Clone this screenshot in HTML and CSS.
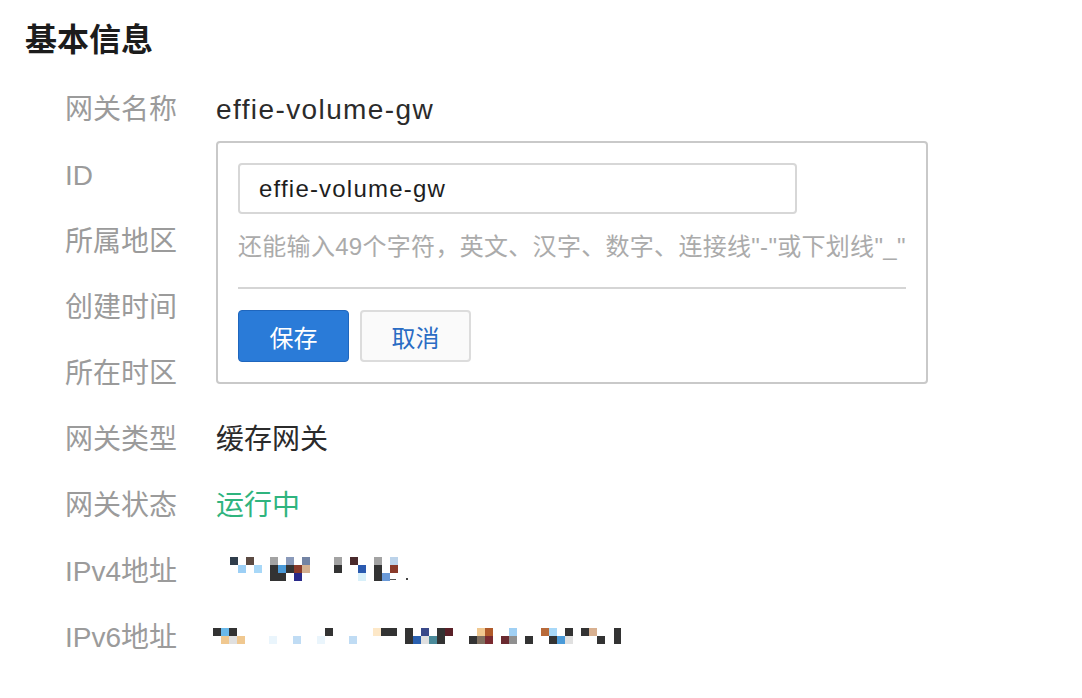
FILE: index.html
```html
<!DOCTYPE html>
<html lang="zh-CN">
<head>
<meta charset="utf-8">
<title>基本信息</title>
<link rel="stylesheet" href="styles.css">
</head>
<body>
<div class="page">
  <h2 class="title">基本信息</h2>
  <dl class="info">
    <div class="row row-name">
      <dt>网关名称</dt>
      <dd class="latin">effie-volume-gw</dd>
      <div class="popover">
        <input class="name-input latin" type="text" value="effie-volume-gw">
        <p class="hint">还能输入49个字符，英文、汉字、数字、连接线"-"或下划线"_"</p>
        <hr class="divider">
        <div class="actions">
          <button class="btn btn-primary" type="button">保存</button>
          <button class="btn btn-default" type="button">取消</button>
        </div>
      </div>
    </div>
    <div class="row"><dt>ID</dt><dd></dd></div>
    <div class="row"><dt>所属地区</dt><dd></dd></div>
    <div class="row"><dt>创建时间</dt><dd></dd></div>
    <div class="row"><dt>所在时区</dt><dd></dd></div>
    <div class="row"><dt>网关类型</dt><dd>缓存网关</dd></div>
    <div class="row"><dt>网关状态</dt><dd class="status">运行中</dd></div>
    <div class="row">
      <dt>IPv4地址</dt>
      <dd>
        <svg class="mosaic" width="420" height="66" viewBox="0 0 420 66" aria-hidden="true">
          <g>
            <rect x="20" y="20" width="8" height="8" fill="#2f3d4c"/>
            <rect x="36" y="20" width="8" height="8" fill="#5b4a42"/>
            <rect x="60" y="20" width="8" height="8" fill="#a3a3a3"/>
            <rect x="76" y="20" width="8" height="8" fill="#8a9aba"/>
            <rect x="92" y="20" width="8" height="8" fill="#7384a4"/>
            <rect x="124" y="20" width="8" height="8" fill="#a3a3a3"/>
            <rect x="140" y="20" width="8" height="8" fill="#4a2a2c"/>
            <rect x="164" y="20" width="8" height="8" fill="#a3a3a3"/>
            <rect x="180" y="20" width="8" height="8" fill="#bcd3ea"/>

            <rect x="28" y="28" width="8" height="8" fill="#9ccff5"/>
            <rect x="44" y="28" width="8" height="8" fill="#a8d8f8"/>
            <rect x="60" y="28" width="8" height="8" fill="#333333"/>
            <rect x="68" y="28" width="8" height="8" fill="#4a9ad8"/>
            <rect x="76" y="28" width="8" height="8" fill="#333333"/>
            <rect x="84" y="28" width="8" height="8" fill="#8a3a2a"/>
            <rect x="92" y="28" width="8" height="8" fill="#d4b090"/>
            <rect x="124" y="28" width="8" height="8" fill="#333333"/>
            <rect x="148" y="28" width="8" height="8" fill="#2a5ab0"/>
            <rect x="164" y="28" width="8" height="8" fill="#333333"/>
            <rect x="180" y="28" width="8" height="8" fill="#8a3a2a"/>

            <rect x="60" y="36" width="16" height="8" fill="#333333"/>
            <rect x="84" y="36" width="8" height="8" fill="#2a2a8a"/>
            <rect x="148" y="36" width="8" height="8" fill="#d8f0fa"/>
            <rect x="164" y="36" width="8" height="8" fill="#333333"/>
            <rect x="172" y="36" width="8" height="8" fill="#6a9ad8"/>
            <rect x="180" y="42" width="6" height="1" fill="#555555"/>
            <rect x="196" y="41" width="2" height="2" fill="#444444"/>
          </g>
        </svg>
      </dd>
    </div>
    <div class="row">
      <dt>IPv6地址</dt>
      <dd>
        <svg class="mosaic" width="420" height="66" viewBox="0 0 420 66" aria-hidden="true">
          <g>
            <rect x="3" y="25" width="8" height="8" fill="#333333"/>
            <rect x="11" y="25" width="8" height="8" fill="#6ab8e8"/>
            <rect x="19" y="25" width="8" height="8" fill="#333333"/>
            <rect x="115" y="25" width="8" height="8" fill="#333333"/>
            <rect x="163" y="25" width="8" height="8" fill="#fde8c8"/>
            <rect x="171" y="25" width="16" height="8" fill="#333333"/>
            <rect x="195" y="25" width="8" height="8" fill="#333333"/>
            <rect x="211" y="25" width="8" height="8" fill="#3a4a8a"/>
            <rect x="227" y="25" width="8" height="8" fill="#333333"/>
            <rect x="235" y="25" width="8" height="8" fill="#5a2028"/>
            <rect x="267" y="25" width="8" height="8" fill="#f0c890"/>
            <rect x="275" y="25" width="8" height="8" fill="#b05a2a"/>
            <rect x="299" y="25" width="8" height="8" fill="#a0d0f4"/>
            <rect x="331" y="25" width="8" height="8" fill="#b86a3a"/>
            <rect x="339" y="25" width="8" height="8" fill="#a8d8f8"/>
            <rect x="355" y="25" width="8" height="8" fill="#333333"/>
            <rect x="371" y="25" width="8" height="8" fill="#333333"/>
            <rect x="379" y="25" width="8" height="8" fill="#d8b090"/>
            <rect x="404" y="25" width="7" height="16" fill="#333333"/>

            <rect x="11" y="33" width="8" height="8" fill="#f0c890"/>
            <rect x="19" y="33" width="8" height="8" fill="#e0e0e0"/>
            <rect x="27" y="33" width="8" height="8" fill="#f0c890"/>
            <rect x="59" y="33" width="8" height="8" fill="#eaf5fc"/>
            <rect x="83" y="33" width="8" height="8" fill="#c0dcf4"/>
            <rect x="107" y="33" width="8" height="8" fill="#eaf5fc"/>
            <rect x="139" y="33" width="8" height="8" fill="#c0dcf4"/>
            <rect x="195" y="33" width="8" height="8" fill="#333333"/>
            <rect x="203" y="33" width="8" height="8" fill="#2a60b0"/>
            <rect x="211" y="33" width="8" height="8" fill="#e0e0e0"/>
            <rect x="219" y="33" width="8" height="8" fill="#4a8a9a"/>
            <rect x="227" y="33" width="8" height="8" fill="#333333"/>
            <rect x="259" y="33" width="8" height="8" fill="#333333"/>
            <rect x="267" y="33" width="8" height="8" fill="#807060"/>
            <rect x="275" y="33" width="8" height="8" fill="#7a2a30"/>
            <rect x="291" y="33" width="8" height="8" fill="#6a2a30"/>
            <rect x="299" y="33" width="8" height="8" fill="#909090"/>
            <rect x="315" y="33" width="8" height="8" fill="#333333"/>
            <rect x="339" y="33" width="8" height="8" fill="#333333"/>
            <rect x="347" y="33" width="8" height="8" fill="#4a9ad8"/>
            <rect x="355" y="33" width="8" height="8" fill="#e0e0e0"/>
            <rect x="387" y="33" width="8" height="8" fill="#333333"/>
          </g>
        </svg>
      </dd>
    </div>
  </dl>
</div>
</body>
</html>
```
FILE: styles.css
```css
* {
  box-sizing: border-box;
}

html, body {
  margin: 0;
  padding: 0;
  background: #ffffff;
}

body {
  font-family: "Liberation Sans", "Noto Sans CJK SC", sans-serif;
  color: #333333;
}

.page {
  padding-left: 25px;
}

.title {
  margin: 0;
  height: 75px;
  line-height: 80px;
  font-size: 32px;
  font-weight: bold;
  color: #1c1c1c;
}

.info {
  margin: 0;
  padding-left: 40px;
}

.row {
  position: relative;
  display: flex;
  height: 66px;
  align-items: center;
  font-size: 28px;
  line-height: 66px;
}

.row dt,
.row dd {
  position: relative;
  top: 2px;
}

.row dt {
  width: 151px;
  flex: none;
  color: #9b9b9b;
}

.row dd {
  margin: 0;
  color: #2b2b2b;
}

.row .latin {
  letter-spacing: 1.4px;
}

.row dd.status {
  color: #2fb47e;
}

.mosaic {
  display: block;
  margin-left: -6px;
  margin-top: -4px;
}

/* Edit popover anchored under the name row */
.popover {
  position: absolute;
  top: 100%;
  left: 151px;
  width: 712px;
  padding: 20px;
  background: #ffffff;
  border: 2px solid #c9c9c9;
  border-radius: 4px;
  line-height: normal;
  z-index: 2;
}

.popover .name-input {
  display: block;
  width: 559px;
  height: 51px;
  margin: 0;
  padding: 0 19px;
  border: 2px solid #d7d7d7;
  border-radius: 4px;
  font-family: "Liberation Sans", "Noto Sans CJK SC", sans-serif;
  font-size: 24px;
  letter-spacing: 1.2px;
  color: #1e1e1e;
  background: #ffffff;
  outline: none;
}

.hint {
  margin: 16px 0 0;
  height: 34px;
  line-height: 34px;
  font-size: 24px;
  letter-spacing: 0.3px;
  color: #ababab;
  white-space: nowrap;
}

.divider {
  margin: 23px 0 0;
  border: 0;
  border-top: 2px solid #d5d5d5;
  height: 0;
}

.actions {
  display: flex;
  gap: 11px;
  margin-top: 21px;
}

.btn {
  width: 111px;
  height: 52px;
  border-radius: 4px;
  font-family: "Liberation Sans", "Noto Sans CJK SC", sans-serif;
  font-size: 24px;
  padding: 0;
  cursor: pointer;
}

.btn-primary {
  background: #2a7bd8;
  border: 1px solid #1f66bd;
  color: #ffffff;
}

.btn-default {
  background: #fafafa;
  border: 2px solid #dcdcdc;
  color: #2a6cc4;
}
```
